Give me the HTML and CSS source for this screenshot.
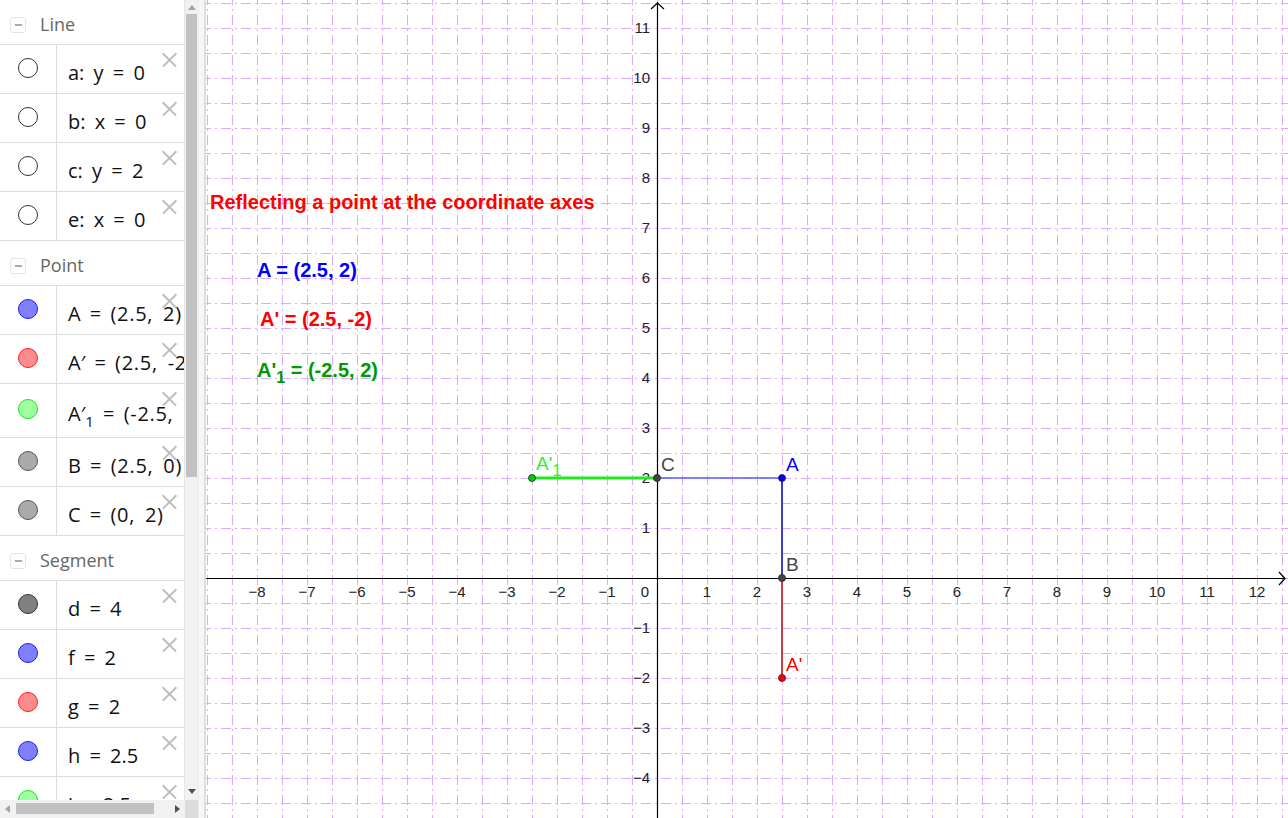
FILE: index.html
```
<!DOCTYPE html>
<html>
<head>
<meta charset="utf-8">
<link rel="stylesheet" href="styles.css">
</head>
<body>
<div class="app">
  <aside class="algebra">
    <div class="av-content">
      <div class="group-header"><span class="toggle"></span><span class="group-name">Line</span></div>
      <div class="item"><div class="marble-cell"><span class="marble hollow"></span></div><div class="formula">a: y = 0</div><span class="close"></span></div>
      <div class="item"><div class="marble-cell"><span class="marble hollow"></span></div><div class="formula">b: x = 0</div><span class="close"></span></div>
      <div class="item"><div class="marble-cell"><span class="marble hollow"></span></div><div class="formula">c: y = 2</div><span class="close"></span></div>
      <div class="item"><div class="marble-cell"><span class="marble hollow"></span></div><div class="formula">e: x = 0</div><span class="close"></span></div>

      <div class="group-header"><span class="toggle"></span><span class="group-name">Point</span></div>
      <div class="item"><div class="marble-cell"><span class="marble blue"></span></div><div class="formula">A = <span class="tuple">(2.5, 2)</span></div><span class="close"></span></div>
      <div class="item"><div class="marble-cell"><span class="marble red"></span></div><div class="formula">A′ = <span class="tuple">(2.5, -2)</span></div><span class="close"></span></div>
      <div class="item tall"><div class="marble-cell"><span class="marble green"></span></div><div class="formula">A′<sub>1</sub> = <span class="tuple">(-2.5, 2)</span></div><span class="close"></span></div>
      <div class="item"><div class="marble-cell"><span class="marble gray"></span></div><div class="formula">B = <span class="tuple">(2.5, 0)</span></div><span class="close"></span></div>
      <div class="item"><div class="marble-cell"><span class="marble gray"></span></div><div class="formula">C = <span class="tuple">(0, 2)</span></div><span class="close"></span></div>

      <div class="group-header"><span class="toggle"></span><span class="group-name">Segment</span></div>
      <div class="item"><div class="marble-cell"><span class="marble dark"></span></div><div class="formula">d = 4</div><span class="close"></span></div>
      <div class="item"><div class="marble-cell"><span class="marble blue"></span></div><div class="formula">f = 2</div><span class="close"></span></div>
      <div class="item"><div class="marble-cell"><span class="marble red"></span></div><div class="formula">g = 2</div><span class="close"></span></div>
      <div class="item"><div class="marble-cell"><span class="marble blue"></span></div><div class="formula">h = 2.5</div><span class="close"></span></div>
      <div class="item"><div class="marble-cell"><span class="marble green"></span></div><div class="formula">i = 2.5</div><span class="close"></span></div>
    </div>
    <div class="vscroll">
      <span class="arrow up"></span>
      <div class="vtrack"><div class="vthumb"></div></div>
      <span class="arrow down"></span>
    </div>
    <div class="hscroll">
      <span class="arrow left"></span>
      <div class="htrack"><div class="hthumb"></div></div>
      <span class="arrow right"></span>
    </div>
    <div class="corner"></div>
  </aside>
  <div class="splitter"></div>
  <main class="graphics">
    <svg class="canvas" width="1082" height="818" viewBox="206 0 1082 818" xmlns="http://www.w3.org/2000/svg">
      <g id="grid"></g>
      <g id="axes"></g>
      <g id="objects"></g>
    </svg>
  </main>
</div>
<script src="script.js"></script>
</body>
</html>
```
FILE: styles.css
```
* { box-sizing: border-box; }
html, body { margin: 0; padding: 0; }
body {
  width: 1288px;
  height: 818px;
  overflow: hidden;
  background: #fff;
  font-family: "Liberation Sans", Arial, sans-serif;
}
.app {
  display: flex;
  width: 1288px;
  height: 818px;
}
.algebra {
  width: 198px;
  height: 818px;
  display: grid;
  grid-template-columns: 185px 13px;
  grid-template-rows: 800px 18px;
  background: #fff;
}
.av-content {
  overflow: hidden;
  border-right: 1px solid #e6e6e6;
}
.group-header {
  height: 45px;
  border-bottom: 1px solid #dcdcdc;
  display: flex;
  align-items: center;
  padding-left: 10px;
  padding-top: 4px;
}
.toggle {
  width: 16px;
  height: 16px;
  border: 1px solid #e4e4e4;
  border-radius: 3px;
  position: relative;
  margin-right: 14px;
  margin-top: 2px;
}
.toggle::after {
  content: "";
  position: absolute;
  left: 4px;
  top: 6px;
  width: 7px;
  height: 1.5px;
  background: #aaa;
}
.group-name {
  font-family: "Open Sans", "Noto Sans", sans-serif;
  font-size: 18px;
  color: #666;
}
.item {
  height: 49px;
  border-bottom: 1px solid #dcdcdc;
  display: flex;
  position: relative;
}
.item.tall { height: 54px; }
.marble-cell {
  width: 57px;
  flex: none;
  border-right: 1px solid #dcdcdc;
  display: flex;
  justify-content: center;
  padding-top: 13px;
}
.marble {
  width: 20px;
  height: 20px;
  border-radius: 50%;
  border: 1px solid #333;
  background: #fff;
}
.marble.blue { background: #8080ff; border-color: #1a1aff; }
.marble.red { background: #ff8c8c; border-color: #ff1a1a; }
.marble.green { background: #a0ffa0; border-color: #22dd22; }
.marble.gray { background: #aaaaaa; border-color: #555; }
.marble.dark { background: #808080; border-color: #333; }
.tall .marble-cell { padding-top: 15px; }
.formula {
  padding-left: 11px;
  padding-top: 14px;
  font-family: "Open Sans", "Noto Sans", sans-serif;
  font-size: 20px;
  color: #111;
  white-space: nowrap;
  word-spacing: 4px;
}
.tuple { letter-spacing: 0.7px; }
.formula sub { font-size: 15px; vertical-align: -6px; line-height: 0; }
.tall .formula { padding-top: 16px; }
.close {
  position: absolute;
  right: 7px;
  top: 7px;
  width: 16px;
  height: 16px;
}
.close::before, .close::after {
  content: "";
  position: absolute;
  left: -1px;
  top: 7px;
  width: 19px;
  height: 1.6px;
  background: #bdbdbd;
  transform: rotate(45deg);
}
.close::after { transform: rotate(-45deg); }

.vscroll {
  background: #f1f1f1;
  display: flex;
  flex-direction: column;
  align-items: center;
}
.vtrack {
  flex: 1;
  width: 100%;
  padding: 0 1px;
}
.vthumb {
  height: 463px;
  background: #c1c1c1;
}
.hscroll {
  background: #f1f1f1;
  display: flex;
  align-items: center;
}
.htrack {
  flex: 1;
  height: 100%;
  padding: 3px 0 4px;
}
.hthumb {
  margin-left: 1px;
  width: 138px;
  height: 100%;
  background: #c1c1c1;
}
.corner { background: #dcdcdc; }
.arrow {
  width: 0;
  height: 0;
  flex: none;
}
.arrow.up { border-left: 4px solid transparent; border-right: 4px solid transparent; border-bottom: 5px solid #a3a3a3; margin: 5px 0 4px; }
.arrow.down { border-left: 4px solid transparent; border-right: 4px solid transparent; border-top: 5px solid #505050; margin: 4px 0 6px; }
.arrow.left { border-top: 4px solid transparent; border-bottom: 4px solid transparent; border-right: 5px solid #a3a3a3; margin: 0 5px; }
.arrow.right { border-top: 4px solid transparent; border-bottom: 4px solid transparent; border-left: 5px solid #505050; margin: 0 5px; }

.splitter {
  width: 8px;
  height: 818px;
  background: #f7f7f7;
  border-left: 1px solid #ececec;
  border-right: 2px solid #dedede;
}
.graphics {
  flex: 1;
  height: 818px;
  overflow: hidden;
  background: #fff;
}
.canvas { display: block; }
.num { font-family: "Liberation Sans", Arial, sans-serif; font-size: 15px; fill: #222; }
.ptlabel { font-family: "Liberation Sans", Arial, sans-serif; font-size: 19px; }
.title { font-family: "Liberation Sans", Arial, sans-serif; font-size: 20px; font-weight: bold; fill: #ff0000; }
.eq { font-family: "Liberation Sans", Arial, sans-serif; font-size: 20px; font-weight: bold; }
```
FILE: script.js
```
(function () {
  var NS = "http://www.w3.org/2000/svg";
  var OX = 657, OY = 578, U = 50;
  var X0 = 206, X1 = 1288, Y0 = 0, Y1 = 818;
  function el(tag, attrs, parent, text) {
    var e = document.createElementNS(NS, tag);
    for (var k in attrs) e.setAttribute(k, attrs[k]);
    if (text != null) e.textContent = text;
    parent.appendChild(e);
    return e;
  }
  var grid = document.getElementById("grid");
  var gridStyle = { stroke: "#dcaaff", "stroke-width": 1, "stroke-dasharray": "10 4 2 4", "stroke-dashoffset": 5 };
  for (var x = OX - 18 * 25; x <= X1; x += 25) {
    if (x < X0) continue;
    var a = Object.assign({ x1: x + 0.5, y1: Y0, x2: x + 0.5, y2: Y1 }, gridStyle);
    el("line", a, grid);
  }
  for (var y = OY - 23 * 25; y <= Y1; y += 25) {
    if (y < Y0) continue;
    var b = Object.assign({ x1: X0, y1: y + 0.5, x2: X1, y2: y + 0.5 }, gridStyle);
    el("line", b, grid);
  }
  var axes = document.getElementById("axes");
  el("line", { x1: X0, y1: OY + 0.5, x2: 1285, y2: OY + 0.5, stroke: "#000", "stroke-width": 1.2 }, axes);
  el("polyline", { points: "1279,572 1285,578.5 1279,585", fill: "none", stroke: "#000", "stroke-width": 1.2 }, axes);
  el("line", { x1: OX + 0.5, y1: 2, x2: OX + 0.5, y2: Y1, stroke: "#000", "stroke-width": 1.2 }, axes);
  el("polyline", { points: "651,9 657.5,3 664,9", fill: "none", stroke: "#000", "stroke-width": 1.2 }, axes);
  for (var i = -8; i <= 12; i++) {
    if (i === 0) continue;
    var t = (i < 0 ? "\u2212" + (-i) : "" + i);
    el("text", { x: OX + i * U, y: 597, "text-anchor": "middle", "class": "num" }, axes, t);
  }
  el("text", { x: 645, y: 597, "text-anchor": "middle", "class": "num" }, axes, "0");
  for (var j = -4; j <= 11; j++) {
    if (j === 0) continue;
    var s = (j < 0 ? "\u2212" + (-j) : "" + j);
    el("text", { x: 650, y: OY - j * U + 5, "text-anchor": "end", "class": "num" }, axes, s);
  }
  var o = document.getElementById("objects");
  function P(px, py) { return [OX + px * U, OY - py * U]; }
  var A = P(2.5, 2), B = P(2.5, 0), C = P(0, 2), Ap = P(2.5, -2), A1 = P(-2.5, 2);
  el("line", { x1: C[0], y1: C[1], x2: A[0], y2: A[1], stroke: "#5a5aff", "stroke-width": 1.3 }, o);
  el("line", { x1: A1[0], y1: A1[1], x2: C[0], y2: C[1], stroke: "#1fe81f", "stroke-width": 3 }, o);
  el("line", { x1: A[0], y1: A[1], x2: B[0], y2: B[1], stroke: "#3c3cc8", "stroke-width": 2 }, o);
  el("line", { x1: B[0], y1: B[1], x2: Ap[0], y2: Ap[1], stroke: "#c83c46", "stroke-width": 2 }, o);
  function pt(p, fill) { el("circle", { cx: p[0], cy: p[1], r: 3.5, fill: fill, stroke: "#222", "stroke-width": 0.8 }, o); }
  pt(A1, "#00cc00"); pt(C, "#444"); pt(A, "#0000ff"); pt(B, "#444"); pt(Ap, "#ff0000");
  el("text", { x: 786, y: 471, "class": "ptlabel", fill: "#0000ff" }, o, "A");
  el("text", { x: 786, y: 571, "class": "ptlabel", fill: "#444" }, o, "B");
  el("text", { x: 786, y: 671, "class": "ptlabel", fill: "#ff0000" }, o, "A'");
  el("text", { x: 661, y: 471, "class": "ptlabel", fill: "#444" }, o, "C");
  var t1 = el("text", { x: 536, y: 470, "class": "ptlabel", fill: "#33ee33" }, o, "A'");
  el("tspan", { dy: 6, "font-size": 17 }, t1, "1");
  el("text", { x: 210, y: 209, "class": "title" }, o, "Reflecting a point at the coordinate axes");
  el("text", { x: 257, y: 277, "class": "eq", fill: "#0000ff" }, o, "A = (2.5, 2)");
  el("text", { x: 260, y: 326, "class": "eq", fill: "#ff0000" }, o, "A' = (2.5, -2)");
  var t2 = el("text", { x: 257, y: 377, "class": "eq", fill: "#009900" }, o, "A'");
  el("tspan", { dy: 6, "font-size": 16 }, t2, "1");
  el("tspan", { dy: -6 }, t2, " = (-2.5, 2)");
})();
```
